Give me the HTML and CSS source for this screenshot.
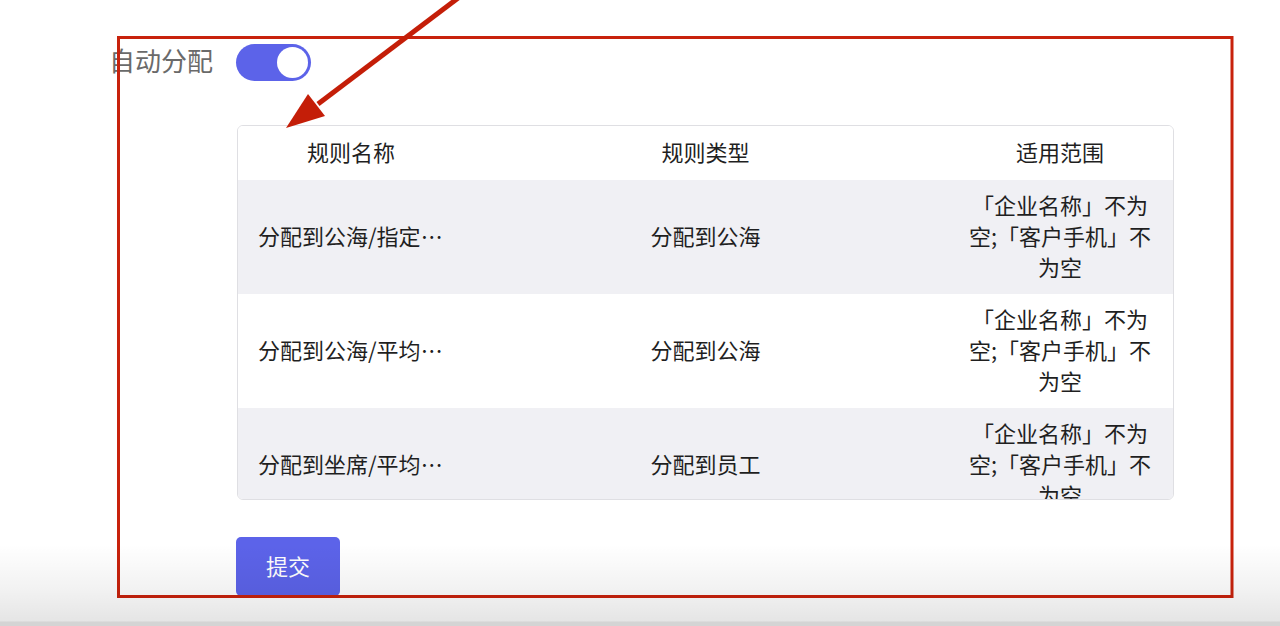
FILE: index.html
```html
<!DOCTYPE html>
<html lang="zh-CN">
<head>
<meta charset="utf-8">
<title>自动分配</title>
<link rel="stylesheet" href="styles.css">
</head>
<body>
<main class="page">
  <div class="form-row switch-row">
    <label class="form-label">自动分配</label>
    <span class="switch is-on"><span class="switch-knob"></span></span>
  </div>

  <div class="form-row table-row">
    <div class="table">
      <div class="tr thead">
        <div class="td">规则名称</div>
        <div class="td">规则类型</div>
        <div class="td">适用范围</div>
      </div>
      <div class="tr stripe">
        <div class="td ellipsis">分配到公海/指定坐席</div>
        <div class="td">分配到公海</div>
        <div class="td">「企业名称」不为空;「客户手机」不为空</div>
      </div>
      <div class="tr">
        <div class="td ellipsis">分配到公海/平均分配</div>
        <div class="td">分配到公海</div>
        <div class="td">「企业名称」不为空;「客户手机」不为空</div>
      </div>
      <div class="tr stripe">
        <div class="td ellipsis">分配到坐席/平均分配</div>
        <div class="td">分配到员工</div>
        <div class="td">「企业名称」不为空;「客户手机」不为空</div>
      </div>
    </div>
  </div>

  <div class="form-row button-row">
    <button class="btn-primary" type="button">提交</button>
  </div>
</main>

<svg class="annotation" width="1280" height="626" viewBox="0 0 1280 626" aria-hidden="true">
  <rect x="118.5" y="37.5" width="1113.5" height="559" fill="none" stroke="#c8220c" stroke-width="3"/>
  <line x1="474" y1="-14" x2="318" y2="104" stroke="#c41e08" stroke-width="5"/>
  <polygon points="286,128 308,94 325,116" fill="#c41e08"/>
</svg>
<div class="bottom-shade"></div>
</body>
</html>
```

FILE: styles.css
```css
* { box-sizing: border-box; }

html, body {
  margin: 0;
  padding: 0;
  background: #ffffff;
  width: 1280px;
  height: 626px;
  overflow: hidden;
}

body {
  font-family: "Noto Sans CJK SC", "Noto Sans", sans-serif;
  color: #1f1f1f;
  position: relative;
}

.page {
  padding-top: 44px;
}

.form-row {
  display: flex;
  align-items: center;
}

.switch-row {
  height: 37px;
}

.form-label {
  width: 213px;
  text-align: right;
  font-size: 26px;
  line-height: 31px;
  margin-bottom: 6px;
  color: #6a6a6a;
  margin-right: 23px;
}

.switch {
  width: 75px;
  height: 37px;
  border-radius: 19px;
  background: #5c63e9;
  display: flex;
  align-items: center;
  justify-content: flex-end;
  padding-right: 3px;
}

.switch-knob {
  width: 31px;
  height: 31px;
  border-radius: 50%;
  background: #ffffff;
}

.table-row {
  margin-top: 44px;
  padding-left: 237px;
}

.table {
  width: 937px;
  height: 375px;
  border: 1px solid #dfdfe3;
  border-radius: 6px;
  overflow: hidden;
  font-size: 22px;
  line-height: 31px;
}

.tr {
  display: grid;
  grid-template-columns: 226px 1fr 226px;
  align-items: center;
  background: #ffffff;
}

.tr.stripe {
  background: #f0f0f4;
}

.td {
  padding: 9px 20px 12px;
  text-align: center;
  min-width: 0;
}

.thead .td {
  padding: 10px 20px 13px;
}

.ellipsis {
  white-space: nowrap;
  overflow: hidden;
  text-overflow: ellipsis;
}

.button-row {
  margin-top: 37px;
  padding-left: 236px;
}

.btn-primary {
  width: 104px;
  height: 59px;
  border: none;
  border-radius: 5px;
  background: #5c63e9;
  color: #ffffff;
  font-family: "Noto Sans CJK SC", "Noto Sans", sans-serif;
  font-size: 22px;
  padding: 0 0 4px;
}

.annotation {
  position: absolute;
  left: 0;
  top: 0;
  pointer-events: none;
}

.bottom-shade {
  position: absolute;
  left: 0;
  right: 0;
  bottom: 0;
  height: 82px;
  pointer-events: none;
  background: linear-gradient(to bottom,
    rgba(0,0,0,0) 0%,
    rgba(0,0,0,0.05) 55%,
    rgba(0,0,0,0.1) 94%,
    rgba(0,0,0,0.17) 95%,
    rgba(0,0,0,0.17) 100%);
}
```
